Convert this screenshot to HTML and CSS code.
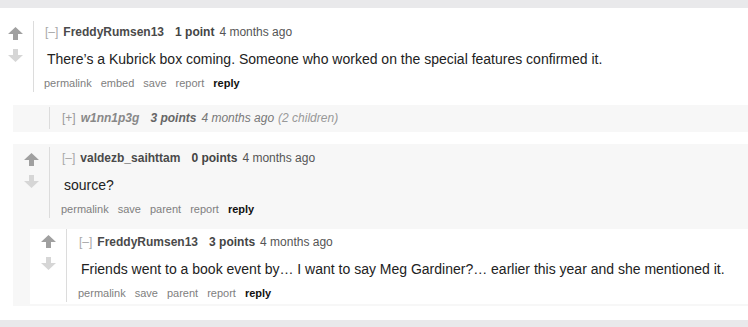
FILE: index.html
```html
<!DOCTYPE html>
<html lang="en">
  <head>
    <meta charset="UTF-8" />
    <title>Comments</title>
    <meta name="viewport" content="width=device-width, initial-scale=1.0" />
    <link rel="stylesheet" href="styles.css">
  </head>

  <body>
    <div class="band"></div>

    <div class="sitetable">
      <div class="thing top">
        <div class="comment">
          <div class="midcol">
            <svg class="arrow up" viewBox="0 0 15 13"><polygon points="7.5,0 15,7 10,7 10,13 5,13 5,7 0,7" /></svg>
            <svg class="arrow down" viewBox="0 0 15 13"><polygon points="5,0 10,0 10,6 15,6 7.5,13 0,6 5,6" /></svg>
          </div>
          <div class="entry">
            <p class="tagline">
              <a class="expand">[–]</a>
              <a class="author">FreddyRumsen13</a>
              <span class="score">1 point</span>
              <span class="time">4 months ago</span>
            </p>
            <div class="md">There’s a Kubrick box coming. Someone who worked on the special features confirmed it.</div>
            <ul class="buttons">
              <li>permalink</li>
              <li>embed</li>
              <li>save</li>
              <li>report</li>
              <li class="reply">reply</li>
            </ul>
          </div>
        </div>

        <div class="child">
          <div class="thing nested collapsed">
            <div class="comment">
              <div class="midcol"></div>
              <div class="entry">
                <p class="tagline">
                  <a class="expand">[+]</a>
                  <a class="author">w1nn1p3g</a>
                  <span class="score">3 points</span>
                  <span class="time">4 months ago</span>
                  <span class="children">(2 children)</span>
                </p>
              </div>
            </div>
          </div>

          <div class="thing nested open">
            <div class="comment">
              <div class="midcol">
                <svg class="arrow up" viewBox="0 0 15 13"><polygon points="7.5,0 15,7 10,7 10,13 5,13 5,7 0,7" /></svg>
                <svg class="arrow down" viewBox="0 0 15 13"><polygon points="5,0 10,0 10,6 15,6 7.5,13 0,6 5,6" /></svg>
              </div>
              <div class="entry">
                <p class="tagline">
                  <a class="expand">[–]</a>
                  <a class="author">valdezb_saihttam</a>
                  <span class="score">0 points</span>
                  <span class="time">4 months ago</span>
                </p>
                <div class="md">source?</div>
                <ul class="buttons">
                  <li>permalink</li>
                  <li>save</li>
                  <li>parent</li>
                  <li>report</li>
                  <li class="reply">reply</li>
                </ul>
              </div>
            </div>

            <div class="child deep">
              <div class="thing nested white">
                <div class="comment">
                  <div class="midcol">
                    <svg class="arrow up" viewBox="0 0 15 13"><polygon points="7.5,0 15,7 10,7 10,13 5,13 5,7 0,7" /></svg>
                    <svg class="arrow down" viewBox="0 0 15 13"><polygon points="5,0 10,0 10,6 15,6 7.5,13 0,6 5,6" /></svg>
                  </div>
                  <div class="entry">
                    <p class="tagline">
                      <a class="expand">[–]</a>
                      <a class="author">FreddyRumsen13</a>
                      <span class="score">3 points</span>
                      <span class="time">4 months ago</span>
                    </p>
                    <div class="md">Friends went to a book event by… I want to say Meg Gardiner?… earlier this year and she mentioned it.</div>
                    <ul class="buttons">
                      <li>permalink</li>
                      <li>save</li>
                      <li>parent</li>
                      <li>report</li>
                      <li class="reply">reply</li>
                    </ul>
                  </div>
                </div>
              </div>
            </div>
          </div>
        </div>
      </div>
    </div>

    <div class="band bottom"></div>
  </body>
</html>
```

FILE: styles.css
```css
* {
  margin: 0;
  padding: 0;
  box-sizing: border-box;
}

body {
  font-family: 'Liberation Sans', Arial, sans-serif;
  background: #ffffff;
  color: #222222;
  width: 748px;
  height: 327px;
  overflow: hidden;
}

.band {
  height: 8px;
  background: #e9e9eb;
}

.band.bottom {
  height: 8px;
  margin-top: 14px;
}

.sitetable {
  padding-top: 13px;
}

.comment {
  display: flex;
  padding-left: 11px;
}

.thing.top > .comment {
  padding-left: 8px;
}

.midcol {
  width: 25px;
  flex: none;
  padding-top: 6px;
  display: flex;
  flex-direction: column;
  gap: 9px;
}

.arrow {
  width: 15px;
  height: 13px;
  display: block;
}

.arrow.up {
  fill: #a0a0a0;
}

.arrow.down {
  fill: #d6d6d6;
}

.entry {
  flex: 1;
  border-left: 1px solid #dcdcdc;
  padding: 3px 0 2px 11px;
}

.thing.nested .entry {
  padding-left: 12px;
}

.tagline {
  font-size: 12px;
  line-height: 16px;
  color: #555555;
  display: flex;
  white-space: nowrap;
}

.expand {
  color: #a8a8a8;
  margin-right: 5px;
}

.author {
  font-weight: bold;
  color: #4a4a4a;
  margin-right: 11px;
}

.score {
  font-weight: bold;
  color: #444444;
  margin-right: 5px;
}

.time {
  color: #555555;
}

.md {
  font-size: 14px;
  line-height: 18px;
  color: #222222;
  margin: 10px 0 8px 2px;
}

.buttons {
  list-style: none;
  display: flex;
  gap: 9px;
  font-size: 11px;
  line-height: 14px;
  color: #808080;
  margin-left: -1px;
}

.buttons .reply {
  font-weight: bold;
  color: #111111;
}

.child {
  margin-left: 13px;
}

.child.deep {
  margin-left: 17px;
  margin-top: 11px;
}

.thing.nested {
  background: #f7f7f7;
}

.thing.nested.white {
  background: #ffffff;
  padding-bottom: 2px;
}

.thing.white .entry {
  padding-top: 5px;
}

.thing.open {
  padding: 3px 0 2px;
}

.collapsed {
  margin-top: 13px;
  margin-bottom: 12px;
  padding: 2px 0 3px;
}

.collapsed .entry {
  padding-top: 3px;
  padding-bottom: 3px;
}

.collapsed .tagline {
  font-style: italic;
  color: #888888;
}

.collapsed .expand {
  font-style: normal;
  color: #999999;
}

.collapsed .author {
  color: #888888;
}

.collapsed .score {
  color: #666666;
}

.collapsed .time {
  color: #777777;
  margin-right: 4px;
}

.collapsed .children {
  color: #999999;
}
```
